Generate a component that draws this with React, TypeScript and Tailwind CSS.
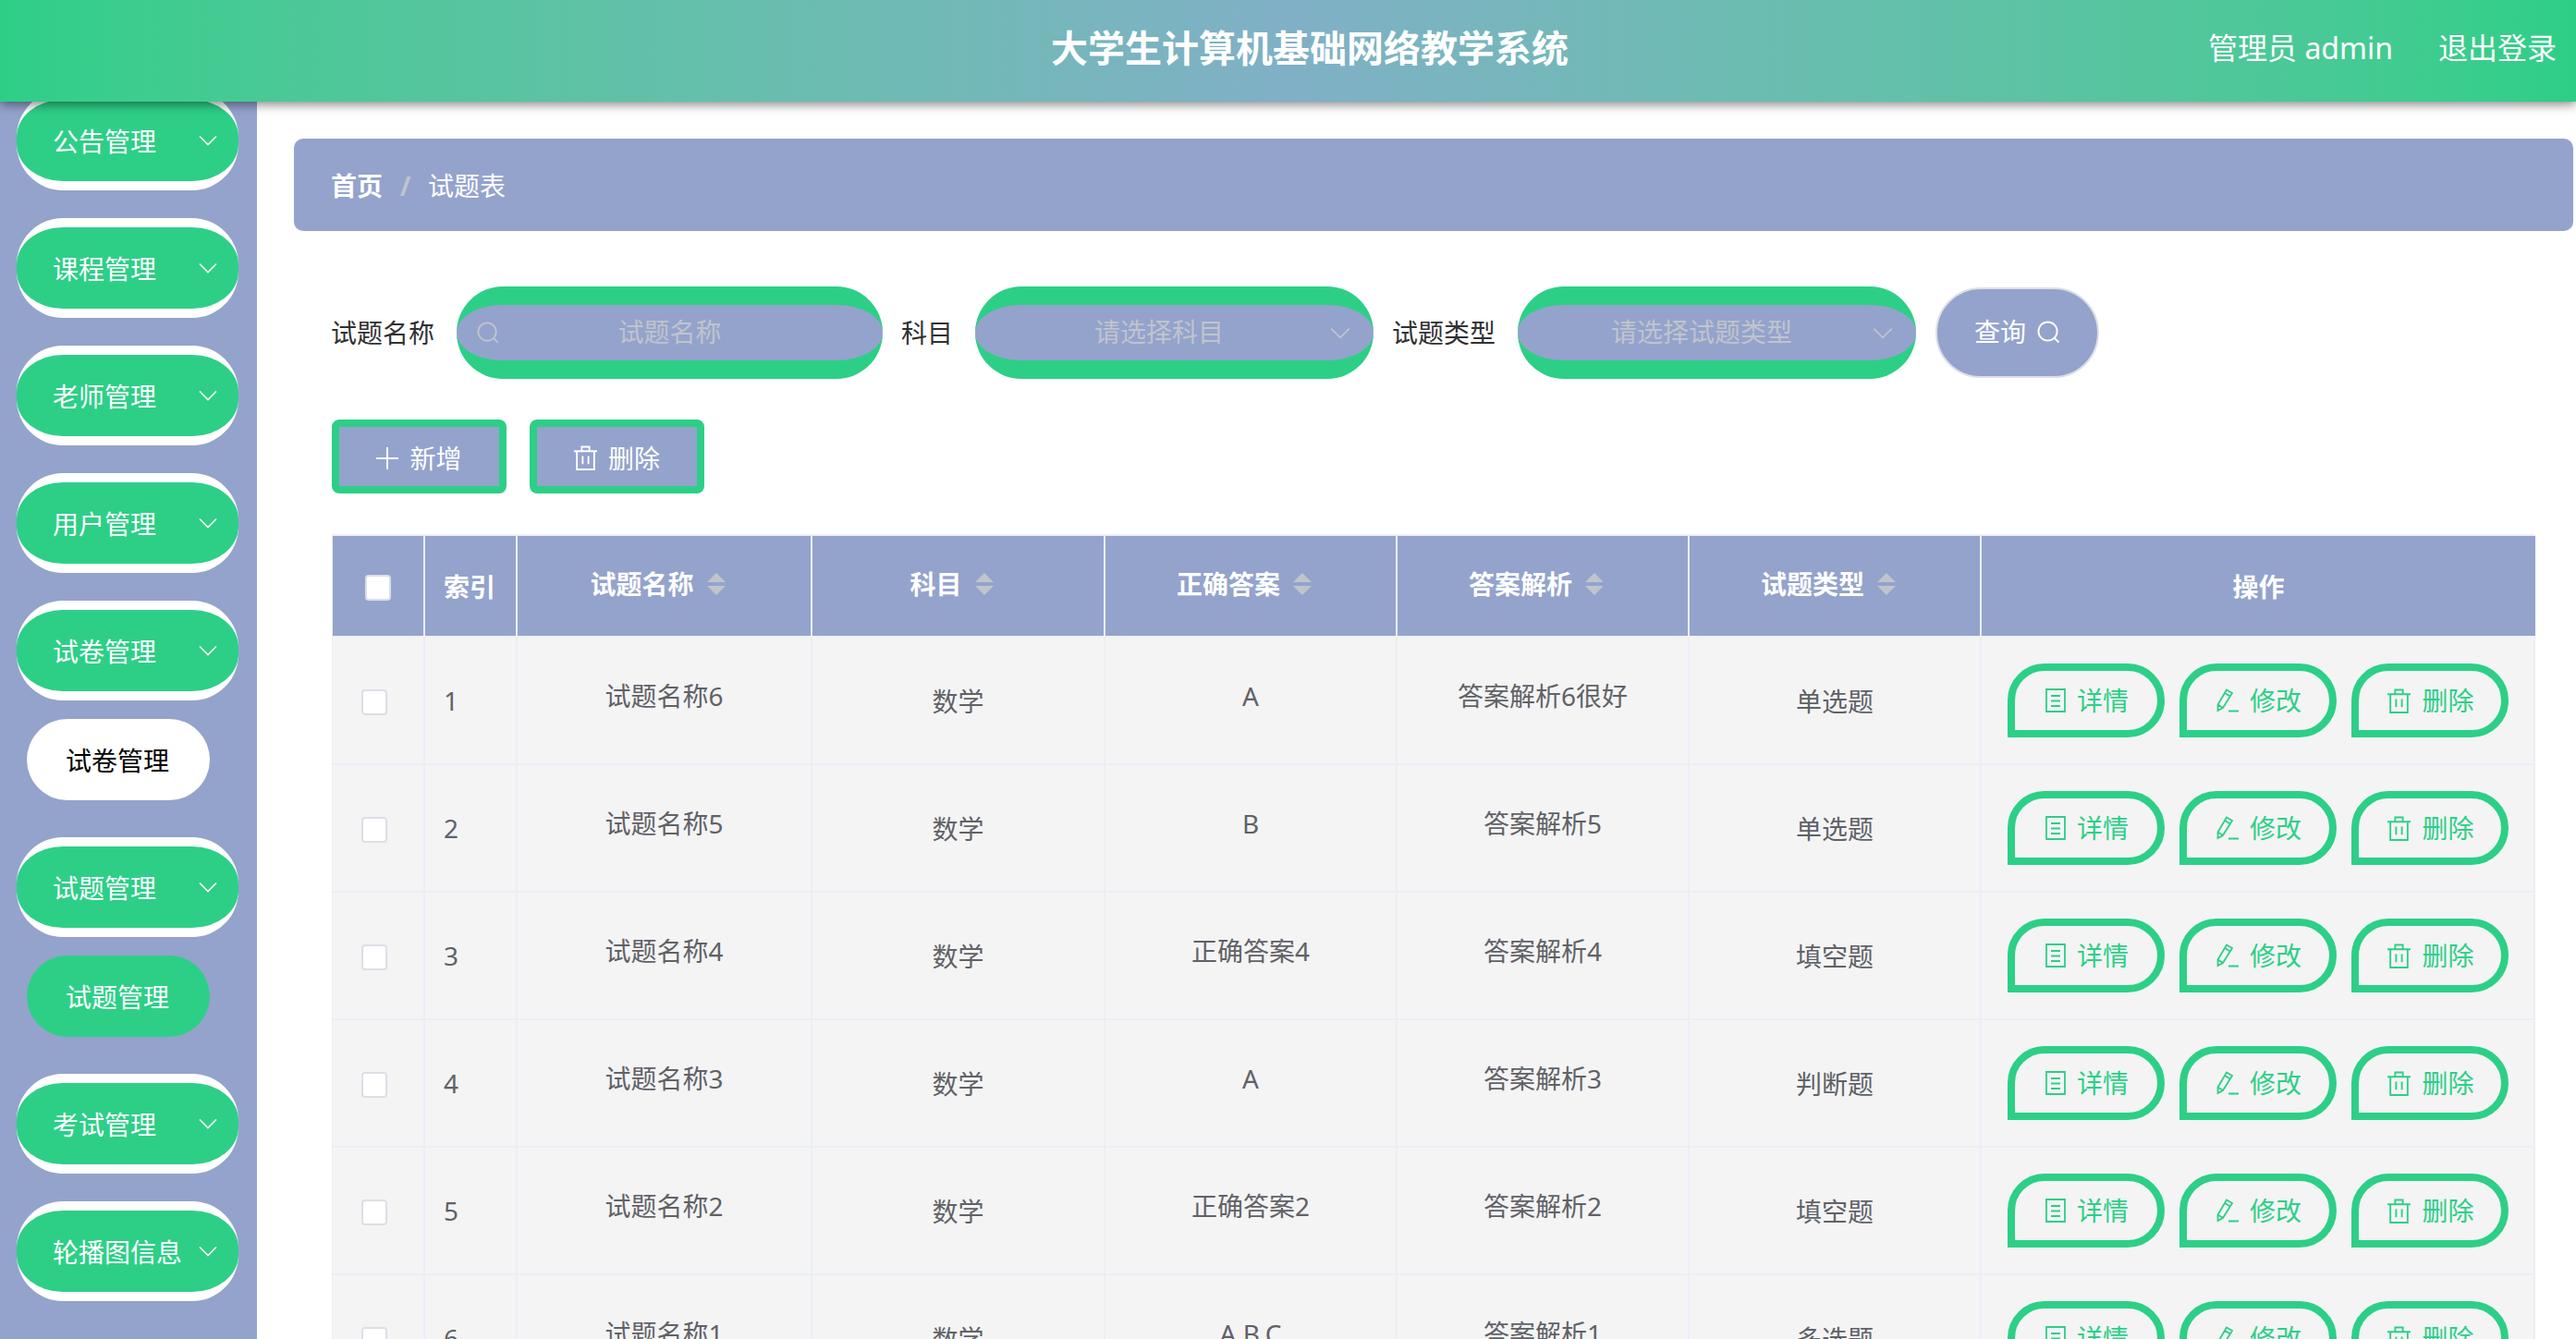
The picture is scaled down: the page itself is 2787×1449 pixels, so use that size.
import React from "react";

const Chevron = ({ className = "" }: { className?: string }) => (
  <svg viewBox="0 0 20 12" fill="none" stroke="currentColor" strokeWidth="1.6" className={className}>
    <path d="M1 1.5 L10 10.5 L19 1.5" />
  </svg>
);
const SearchIcon = ({ className = "" }: { className?: string }) => (
  <svg viewBox="0 0 26 26" fill="none" stroke="currentColor" strokeWidth="2" className={className}>
    <circle cx="12" cy="12" r="10.5" />
    <path d="M19.5 19.5 L24.5 24.5" />
  </svg>
);
const PlusIcon = ({ className = "" }: { className?: string }) => (
  <svg viewBox="0 0 24 24" fill="none" stroke="currentColor" strokeWidth="2" className={className}>
    <path d="M12 0 V24 M0 12 H24" />
  </svg>
);
const TrashIcon = ({ className = "" }: { className?: string }) => (
  <svg viewBox="0 0 24 26" fill="none" stroke="currentColor" strokeWidth="1.8" className={className}>
    <path d="M0 6 H24 M8 6 V1.5 H16 V6 M3 6 V25 H21 V6 M9 11 V19.5 M15 11 V19.5" />
  </svg>
);
const DocIcon = ({ className = "" }: { className?: string }) => (
  <svg viewBox="0 0 22 26" fill="none" stroke="currentColor" strokeWidth="1.8" className={className}>
    <path d="M1 1 H21 V25 H1 Z M6 8 H16 M6 13.5 H16 M6 19 H16" />
  </svg>
);
const EditIcon = ({ className = "" }: { className?: string }) => (
  <svg viewBox="0 0 24 26" fill="none" stroke="currentColor" strokeWidth="1.8" className={className}>
    <path d="M11 1.5 L17 5 L7 21 L1.5 24 L1.5 17.5 Z M9 5 L15 8.5 M1.5 17.5 L7 21 M13 24.5 H24" />
  </svg>
);

const menus: { label: string; sub?: { label: string; active?: boolean } }[] = [
  { label: "公告管理" },
  { label: "课程管理" },
  { label: "老师管理" },
  { label: "用户管理" },
  { label: "试卷管理", sub: { label: "试卷管理" } },
  { label: "试题管理", sub: { label: "试题管理", active: true } },
  { label: "考试管理" },
  { label: "轮播图信息" },
];

const columns = [
  "w-[100px]",
  "w-[100px]",
  "w-[319px]",
  "w-[317px]",
  "w-[316px]",
  "w-[316px]",
  "w-[316px]",
  "w-[599px]",
];

const rows = [
  ["1", "试题名称6", "数学", "A", "答案解析6很好", "单选题"],
  ["2", "试题名称5", "数学", "B", "答案解析5", "单选题"],
  ["3", "试题名称4", "数学", "正确答案4", "答案解析4", "填空题"],
  ["4", "试题名称3", "数学", "A", "答案解析3", "判断题"],
  ["5", "试题名称2", "数学", "正确答案2", "答案解析2", "填空题"],
  ["6", "试题名称1", "数学", "A,B,C", "答案解析1", "多选题"],
];

const SortHead = ({ label, w }: { label: string; w: string }) => (
  <div className={`${w} h-full flex items-center justify-center border-r-2 border-[#ebeef5] pb-1 font-bold text-white`}>
    <span>{label}</span>
    <span className="w-[48px] flex flex-col items-center gap-1">
      <span className="w-0 h-0 border-x-[10px] border-x-transparent border-b-[10px] border-b-[#c0c4cc]" />
      <span className="w-0 h-0 border-x-[10px] border-x-transparent border-t-[10px] border-t-[#c0c4cc]" />
    </span>
  </div>
);

const ActionBtn = ({ icon, label }: { icon: React.ReactNode; label: string }) => (
  <button className="w-[170px] h-[80px] border-[8px] border-[#2dcf87] rounded-[40px] rounded-bl-none flex items-center justify-center gap-[12px] pl-[3px] text-[#2dcf87] text-[28px] leading-none">
    {icon}
    <span>{label}</span>
  </button>
);

const Field = ({ width, placeholder, icon }: { width: string; placeholder: string; icon: "search" | "arrow" }) => (
  <div className={`relative ${width} h-[100px]`}>
    <input
      readOnly
      placeholder={placeholder}
      className={`w-full h-full rounded-[50px] border-y-[20px] border-x-0 border-[#2dcf87] bg-[#94a3cc] text-center text-[28px] outline-none pb-[2px] placeholder:text-[#c0c4cc] ${
        icon === "arrow" ? "pr-[33px]" : ""
      }`}
    />
    {icon === "search" ? (
      <SearchIcon className="absolute left-[22px] top-[38px] w-[24px] h-[24px] text-[#c0c4cc]" />
    ) : (
      <Chevron className="absolute right-[25px] top-[44px] w-[22px] h-[13px] text-[#c0c4cc]" />
    )}
  </div>
);

export default function App() {
  return (
    <div className="w-[2787px] h-[1449px] overflow-hidden flex flex-col bg-white font-['Noto_Sans','Noto_Sans_CJK_SC',sans-serif]">
      {/* header */}
      <header className="relative z-10 h-[110px] shrink-0 flex items-center justify-between pl-[1137px] pr-[21px] pb-[7px] text-white bg-gradient-to-r from-[#2dcf87] via-[#80b0c6] to-[#2dcf87] shadow-[0_2px_12px_rgba(0,0,0,0.55)]">
        <div className="text-[40px] font-bold leading-none">大学生计算机基础网络教学系统</div>
        <div className="flex items-center gap-[49px] text-[32px] leading-none">
          <span>管理员 admin</span>
          <span>退出登录</span>
        </div>
      </header>

      <div className="flex-1 flex min-h-0">
        {/* sidebar */}
        <aside className="w-[278px] shrink-0 bg-[#94a3cc] overflow-hidden px-[18px]">
          <div className="-mt-[12px] flex flex-col gap-[30px]">
            {menus.map((m) => (
              <div key={m.label} className="flex flex-col">
                <div className="relative w-[240px] h-[108px] shrink-0 rounded-[50px] border-y-[10px] border-white bg-[#2dcf87] text-white text-[28px] flex items-center pl-[39px] pt-[2px]">
                  <span>{m.label}</span>
                  <Chevron className="absolute right-[23px] top-[38px] w-[20px] h-[12px] text-white" />
                </div>
                {m.sub && (
                  <div
                    className={`mt-[20px] mb-[10px] ml-[11px] w-[198px] h-[88px] rounded-[50px] flex items-center justify-center pr-[2px] pt-[2px] text-[28px] ${
                      m.sub.active ? "bg-[#2dcf87] text-white" : "bg-white text-black"
                    }`}
                  >
                    {m.sub.label}
                  </div>
                )}
              </div>
            ))}
          </div>
        </aside>

        {/* main */}
        <main className="flex-1 min-w-0 pt-[40px] pl-[40px] pr-[3px]">
          <div className="h-[100px] rounded-[10px] bg-[#94a3cc] flex items-center pl-[40px] pt-[2px] text-[28px] text-white">
            <span className="font-bold">首页</span>
            <span className="w-[49px] text-center text-[#c0c4cc] font-bold">/</span>
            <span>试题表</span>
          </div>

          <div className="pl-[41px]">
            {/* search */}
            <div className="mt-[60px] flex items-center text-[28px] text-[#303133]">
              <span className="w-[135px] -ml-[1px] mr-[1px]">试题名称</span>
              <Field width="w-[461px]" placeholder="试题名称" icon="search" />
              <span className="ml-[20px] w-[80px]">科目</span>
              <Field width="w-[431px]" placeholder="请选择科目" icon="arrow" />
              <span className="ml-[20px] mr-[1px] w-[135px]">试题类型</span>
              <Field width="w-[431px]" placeholder="请选择试题类型" icon="arrow" />
              <button className="ml-[21px] w-[177px] h-[98px] rounded-[50px] border-2 border-[#dcdfe6] bg-[#94a3cc] text-white flex items-center justify-center gap-[12px] pb-[2px]">
                <span>查询</span>
                <SearchIcon className="w-[25px] h-[25px]" />
              </button>
            </div>

            {/* buttons */}
            <div className="mt-[44px] flex gap-[25px] text-[28px] text-white">
              <button className="w-[189px] h-[80px] rounded-[8px] border-[8px] border-[#2dcf87] bg-[#94a3cc] flex items-center justify-center gap-[12px] pt-[3px]">
                <PlusIcon className="w-[24px] h-[24px]" />
                <span>新增</span>
              </button>
              <button className="w-[189px] h-[80px] rounded-[8px] border-[8px] border-[#2dcf87] bg-[#94a3cc] flex items-center justify-center gap-[12px] pt-[3px]">
                <TrashIcon className="w-[25px] h-[27px]" />
                <span>删除</span>
              </button>
            </div>

            {/* table */}
            <div className="mt-[44px] w-[2384px] border-l border-t-2 border-[#ebeef5] text-[28px]">
              <div className="flex h-[110px] bg-[#94a3cc] border-b-2 border-[#f0f2f7]">
                <div className={`${columns[0]} h-full flex items-center justify-center border-r-2 border-[#ebeef5] pt-[4px]`}>
                  <span className="w-[28px] h-[28px] rounded-[4px] border-2 border-[#dcdfe6] bg-white" />
                </div>
                <div className={`${columns[1]} h-full flex items-center pl-[20px] pt-[2px] border-r-2 border-[#ebeef5] font-bold text-white`}>
                  索引
                </div>
                <SortHead label="试题名称" w={columns[2]} />
                <SortHead label="科目" w={columns[3]} />
                <SortHead label="正确答案" w={columns[4]} />
                <SortHead label="答案解析" w={columns[5]} />
                <SortHead label="试题类型" w={columns[6]} />
                <div className={`${columns[7]} h-full flex items-center justify-center pt-[2px] font-bold text-white`}>操作</div>
              </div>

              {rows.map((r) => (
                <div key={r[0]} className="flex h-[138px] bg-[#f4f4f5] border-b-2 border-[#ebeef5] text-[#606266]">
                  <div className={`${columns[0]} flex items-center pl-[31px] border-r-2 border-[#ebeef5] pt-[4px]`}>
                    <span className="w-[28px] h-[28px] rounded-[4px] border-2 border-[#dcdfe6] bg-white" />
                  </div>
                  <div className={`${columns[1]} flex items-center pl-[20px] border-r-2 border-[#ebeef5]`}>{r[0]}</div>
                  <div className={`${columns[2]} flex items-center justify-center pb-[10px] border-r-2 border-[#ebeef5]`}>{r[1]}</div>
                  <div className={`${columns[3]} flex items-center justify-center pt-[2px] border-r-2 border-[#ebeef5]`}>{r[2]}</div>
                  <div className={`${columns[4]} flex items-center justify-center pb-[10px] border-r-2 border-[#ebeef5]`}>{r[3]}</div>
                  <div className={`${columns[5]} flex items-center justify-center pb-[10px] border-r-2 border-[#ebeef5]`}>{r[4]}</div>
                  <div className={`${columns[6]} flex items-center justify-center pt-[2px] border-r-2 border-[#ebeef5]`}>{r[5]}</div>
                  <div className={`${columns[7]} flex items-center justify-center gap-[16px] border-r-2 border-[#ebeef5]`}>
                    <ActionBtn icon={<DocIcon className="w-[22px] h-[26px]" />} label="详情" />
                    <ActionBtn icon={<EditIcon className="w-[24px] h-[26px]" />} label="修改" />
                    <ActionBtn icon={<TrashIcon className="w-[25px] h-[27px]" />} label="删除" />
                  </div>
                </div>
              ))}
            </div>
          </div>
        </main>
      </div>
    </div>
  );
}
